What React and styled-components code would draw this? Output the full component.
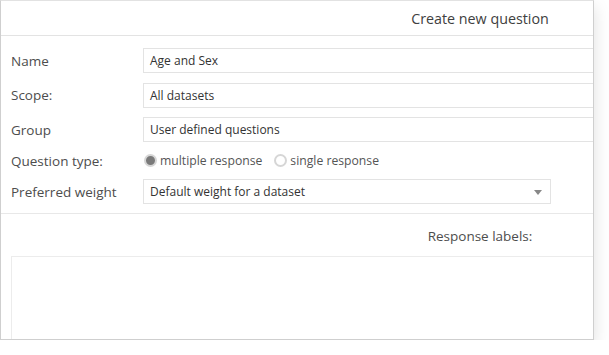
import React from 'react'
import styled, { createGlobalStyle } from 'styled-components'

const Global = createGlobalStyle`
  html, body {
    margin: 0;
    padding: 0;
    background: #fff;
    font-family: "Open Sans", "Liberation Sans", sans-serif;
  }
`

const Panel = styled.div`
  width: 592px;
  height: 338px;
  border: 1px solid #cfcfcf;
  border-top-color: #e2e2e2;
  background: #fff;
  overflow: hidden;
  box-shadow: 0 7px 16px rgba(0, 0, 0, 0.13);
`

const Inner = styled.div`
  width: 958px;
`

const Header = styled.div`
  height: 34px;
  border-bottom: 1px solid #e3e3e3;
  display: flex;
  align-items: center;
  justify-content: center;
  font-size: 14.3px;
  color: #404040;
`

const Form = styled.div`
  padding: 12px 0 9px 10px;
  border-bottom: 1px solid #e8e8e8;
  display: flex;
  flex-direction: column;
  gap: 9.5px;
`

const Row = styled.div`
  display: flex;
  align-items: center;
  height: ${p => p.$h || 25}px;
`

const Label = styled.div`
  width: 132px;
  flex: none;
  font-size: 13.5px;
  color: #4d4d4d;
`

const Field = styled.div`
  box-sizing: border-box;
  height: 25px;
  width: ${p => p.$w || 815}px;
  border: 1px solid #e3e3e3;
  padding: 0 6px;
  display: flex;
  align-items: center;
  font-size: 12px;
  color: #333;
  position: relative;
`

const Caret = styled.span`
  position: absolute;
  right: 8px;
  top: 10px;
  width: 0;
  height: 0;
  border-left: 4px solid transparent;
  border-right: 4px solid transparent;
  border-top: 5px solid #888;
`

const Radios = styled.div`
  display: flex;
  align-items: center;
  gap: 12px;
  padding-left: 1px;
`

const Option = styled.label`
  display: flex;
  align-items: center;
  gap: 3px;
  font-size: 12.2px;
  color: #555;
`

const Dot = styled.span`
  box-sizing: border-box;
  width: 13px;
  height: 13px;
  border-radius: 50%;
  border: 2px solid #d6d6d6;
  background: ${p => (p.$on ? '#7a7a7a' : '#fff')};
`

const Section = styled.div`
  padding-top: 13px;
`

const SectionTitle = styled.div`
  text-align: center;
  font-size: 13.5px;
  color: #4d4d4d;
  height: 18px;
  line-height: 18px;
  margin-bottom: 11px;
`

const LabelsBox = styled.div`
  margin-left: 10px;
  height: 120px;
  border: 1px solid #ececec;
`

const fields = [
  ['Name', 'Age and Sex'],
  ['Scope:', 'All datasets'],
  ['Group', 'User defined questions'],
]

export default function App() {
  return (
    <>
      <Global />
      <Panel>
        <Inner>
          <Header>Create new question</Header>
          <Form>
            {fields.map(([label, value]) => (
              <Row key={label}>
                <Label>{label}</Label>
                <Field>{value}</Field>
              </Row>
            ))}
            <Row $h={18}>
              <Label>Question type:</Label>
              <Radios>
                <Option><Dot $on />multiple response</Option>
                <Option><Dot />single response</Option>
              </Radios>
            </Row>
            <Row>
              <Label>Preferred weight</Label>
              <Field $w={408}>
                Default weight for a dataset
                <Caret />
              </Field>
            </Row>
          </Form>
          <Section>
            <SectionTitle>Response labels:</SectionTitle>
            <LabelsBox />
          </Section>
        </Inner>
      </Panel>
    </>
  )
}
